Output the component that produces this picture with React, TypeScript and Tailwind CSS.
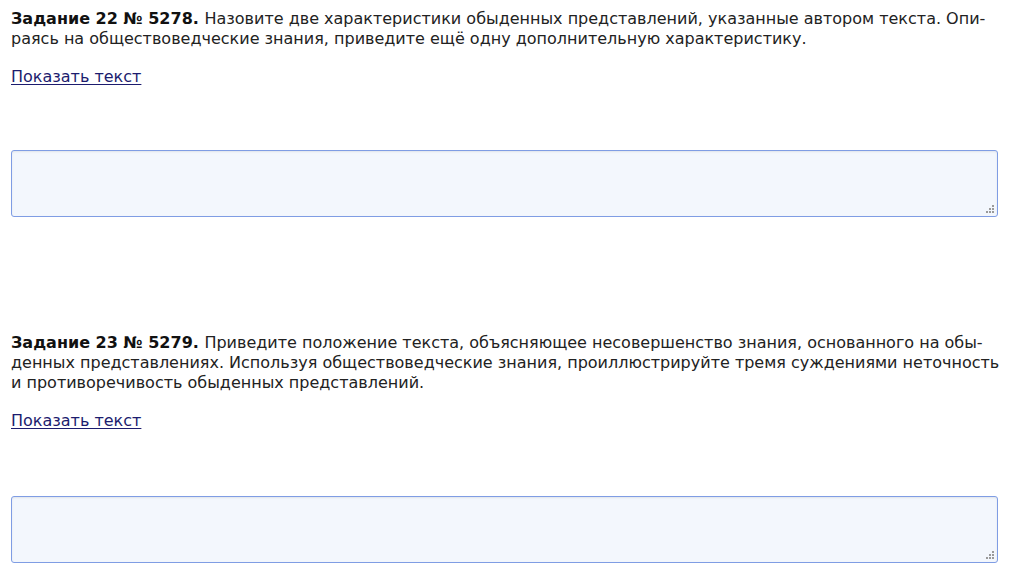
const font = { fontFamily: '"DejaVu Sans", Verdana, sans-serif' }

interface TaskProps {
  num: number
  id: number
  lines: string[]
  gapClass: string
}

const Grip = () => (
  <svg className="absolute right-[4px] bottom-[4px]" width="9" height="9" viewBox="0 0 9 9">
    <rect x="7" y="1" width="2" height="2" fill="#9a9a9a" />
    <rect x="4" y="4" width="2" height="2" fill="#9a9a9a" />
    <rect x="7" y="4" width="2" height="2" fill="#9a9a9a" />
    <rect x="1" y="7" width="2" height="2" fill="#9a9a9a" />
    <rect x="4" y="7" width="2" height="2" fill="#9a9a9a" />
    <rect x="7" y="7" width="2" height="2" fill="#9a9a9a" />
  </svg>
)

const Task = ({ num, id, lines, gapClass }: TaskProps) => (
  <div className="flex flex-col">
    <p className="text-[16px] leading-[20px] text-[#222] whitespace-nowrap">
      {lines.map((line, i) => (
        <span key={i} className="block">
          {i === 0 && (
            <b className="font-bold text-[#111]">
              Задание {num} № {id}.{" "}
            </b>
          )}
          {line}
        </span>
      ))}
    </p>
    <a href="#" className="mt-[18px] text-[16px] leading-[20px] text-[#1c1c6e] underline underline-offset-2 self-start">
      Показать текст
    </a>
    <div className={`relative mr-[26px] ${gapClass}`}>
      <textarea className="block w-full h-[67px] rounded-[3px] border border-[#7f9de4] bg-[#f3f7fd] resize-none outline-none shadow-[inset_0_1px_2px_rgba(0,0,0,0.08)]" />
      <Grip />
    </div>
  </div>
)

export default function App() {
  return (
    <div className="w-[1024px] h-[574px] bg-white overflow-hidden pl-[11px] pt-[9px]" style={font}>
      <Task
        num={22}
        id={5278}
        gapClass="mt-[63px]"
        lines={[
          "Назовите две характеристики обыденных представлений, указанные автором текста. Опи-",
          "раясь на обществоведческие знания, приведите ещё одну дополнительную характеристику.",
        ]}
      />
      <div className="mt-[116px]">
        <Task
          num={23}
          id={5279}
          gapClass="mt-[65px]"
          lines={[
            "Приведите положение текста, объясняющее несовершенство знания, основанного на обы-",
            "денных представлениях. Используя обществоведческие знания, проиллюстрируйте тремя суждениями неточность",
            "и противоречивость обыденных представлений.",
          ]}
        />
      </div>
    </div>
  )
}
